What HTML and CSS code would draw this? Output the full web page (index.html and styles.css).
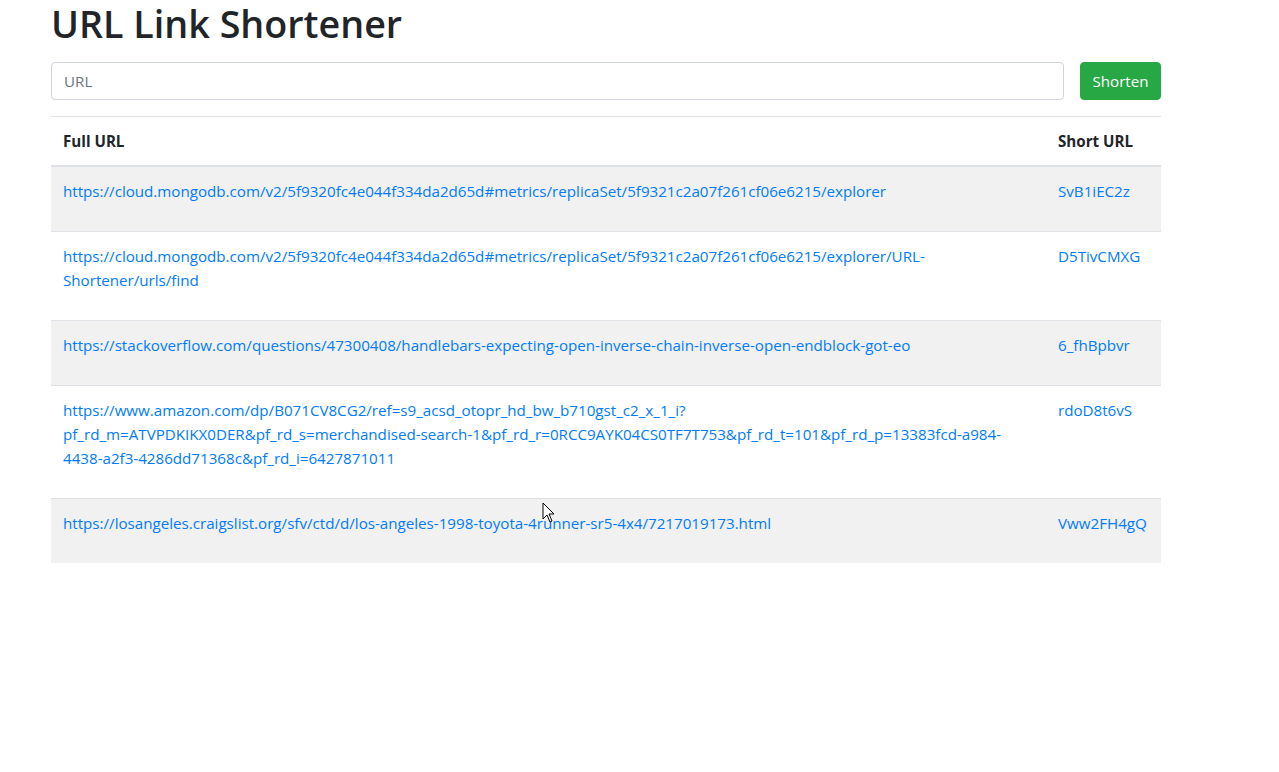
FILE: index.html
```html
<!DOCTYPE html>
<html lang="en">
<head>
<meta charset="utf-8">
<title>URL Link Shortener</title>
<link rel="stylesheet" href="styles.css">
</head>
<body>
<div class="container">
  <h1 class="title">URL Link Shortener</h1>
  <form class="shorten-form">
    <input class="url-input" type="url" placeholder="URL">
    <button class="btn-shorten" type="button">Shorten</button>
  </form>
  <table class="url-table">
    <thead>
      <tr><th class="col-full">Full URL</th><th class="col-short">Short URL</th></tr>
    </thead>
    <tbody>
      <tr><td><a href="#">https://cloud.mongodb.com/v2/5f9320fc4e044f334da2d65d#metrics/replicaSet/5f9321c2a07f261cf06e6215/explorer</a></td><td><a href="#">SvB1iEC2z</a></td></tr>
      <tr><td><a href="#">https://cloud.mongodb.com/v2/5f9320fc4e044f334da2d65d#metrics/replicaSet/5f9321c2a07f261cf06e6215/explorer/URL-Shortener/urls/find</a></td><td><a href="#">D5TivCMXG</a></td></tr>
      <tr><td><a href="#">https://stackoverflow.com/questions/47300408/handlebars-expecting-open-inverse-chain-inverse-open-endblock-got-eo</a></td><td><a href="#">6_fhBpbvr</a></td></tr>
      <tr><td><a href="#">https://www.amazon.com/dp/B071CV8CG2/ref=s9_acsd_otopr_hd_bw_b710gst_c2_x_1_i?pf_rd_m=ATVPDKIKX0DER&amp;pf_rd_s=merchandised-search-1&amp;pf_rd_r=0RCC9AYK04CS0TF7T753&amp;pf_rd_t=101&amp;pf_rd_p=13383fcd-a984-4438-a2f3-4286dd71368c&amp;pf_rd_i=6427871011</a></td><td><a href="#">rdoD8t6vS</a></td></tr>
      <tr><td><a href="#">https://losangeles.craigslist.org/sfv/ctd/d/los-angeles-1998-toyota-4runner-sr5-4x4/7217019173.html</a></td><td><a href="#">Vww2FH4gQ</a></td></tr>
    </tbody>
  </table>
</div>
<svg class="cursor" width="14" height="22" viewBox="0 0 14 22"><path d="M1 1 L1 17 L5 13 L8 20 L10 19 L7 12 L12 12 Z" fill="#fff" stroke="#000" stroke-width="1"/></svg>
</body>
</html>
```
FILE: styles.css
```css
html, body {
  margin: 0;
  padding: 0;
  background: #fff;
}
body {
  font-family: "Open Sans", "Noto Sans", sans-serif;
  font-size: 15.15px;
  line-height: 24px;
  color: #212529;
}
.container {
  width: 1110px;
  margin-left: 51px;
}
.title {
  margin: 0 0 14px;
  font-size: 37.7px;
  font-weight: 600;
  line-height: 48px;
}
.shorten-form {
  display: flex;
  gap: 16px;
  margin: 0 0 16px;
}
.url-input {
  width: 1013px;
  box-sizing: border-box;
  height: 38px;
  padding: 6px 12px;
  font: inherit;
  color: #495057;
  border: 1px solid #ced4da;
  border-radius: 4px;
  outline: none;
}
.url-input::placeholder {
  color: #6c757d;
}
.btn-shorten {
  width: 81px;
  height: 38px;
  font: inherit;
  color: #fff;
  background: #28a745;
  border: 1px solid #28a745;
  border-radius: 4px;
  padding: 0;
}
.url-table {
  width: 1110px;
  border-collapse: collapse;
}
.url-table th {
  text-align: left;
  font-weight: 700;
  padding: 12px;
  border-top: 1px solid #dee2e6;
  border-bottom: 2px solid #dee2e6;
  vertical-align: bottom;
}
.url-table .col-short {
  width: 91px;
  white-space: nowrap;
}
.url-table td {
  padding: 12px 12px 28px;
  border-top: 1px solid #dee2e6;
  vertical-align: top;
}
.url-table thead + tbody tr:first-child td {
  border-top: 0;
}
.url-table tbody tr:nth-child(odd) {
  background: #f1f1f1;
}
.url-table a {
  color: #007bff;
  text-decoration: none;
  word-break: break-word;
}
.url-table td:last-child a {
  white-space: nowrap;
}
.cursor {
  position: absolute;
  left: 542px;
  top: 502px;
}
```
